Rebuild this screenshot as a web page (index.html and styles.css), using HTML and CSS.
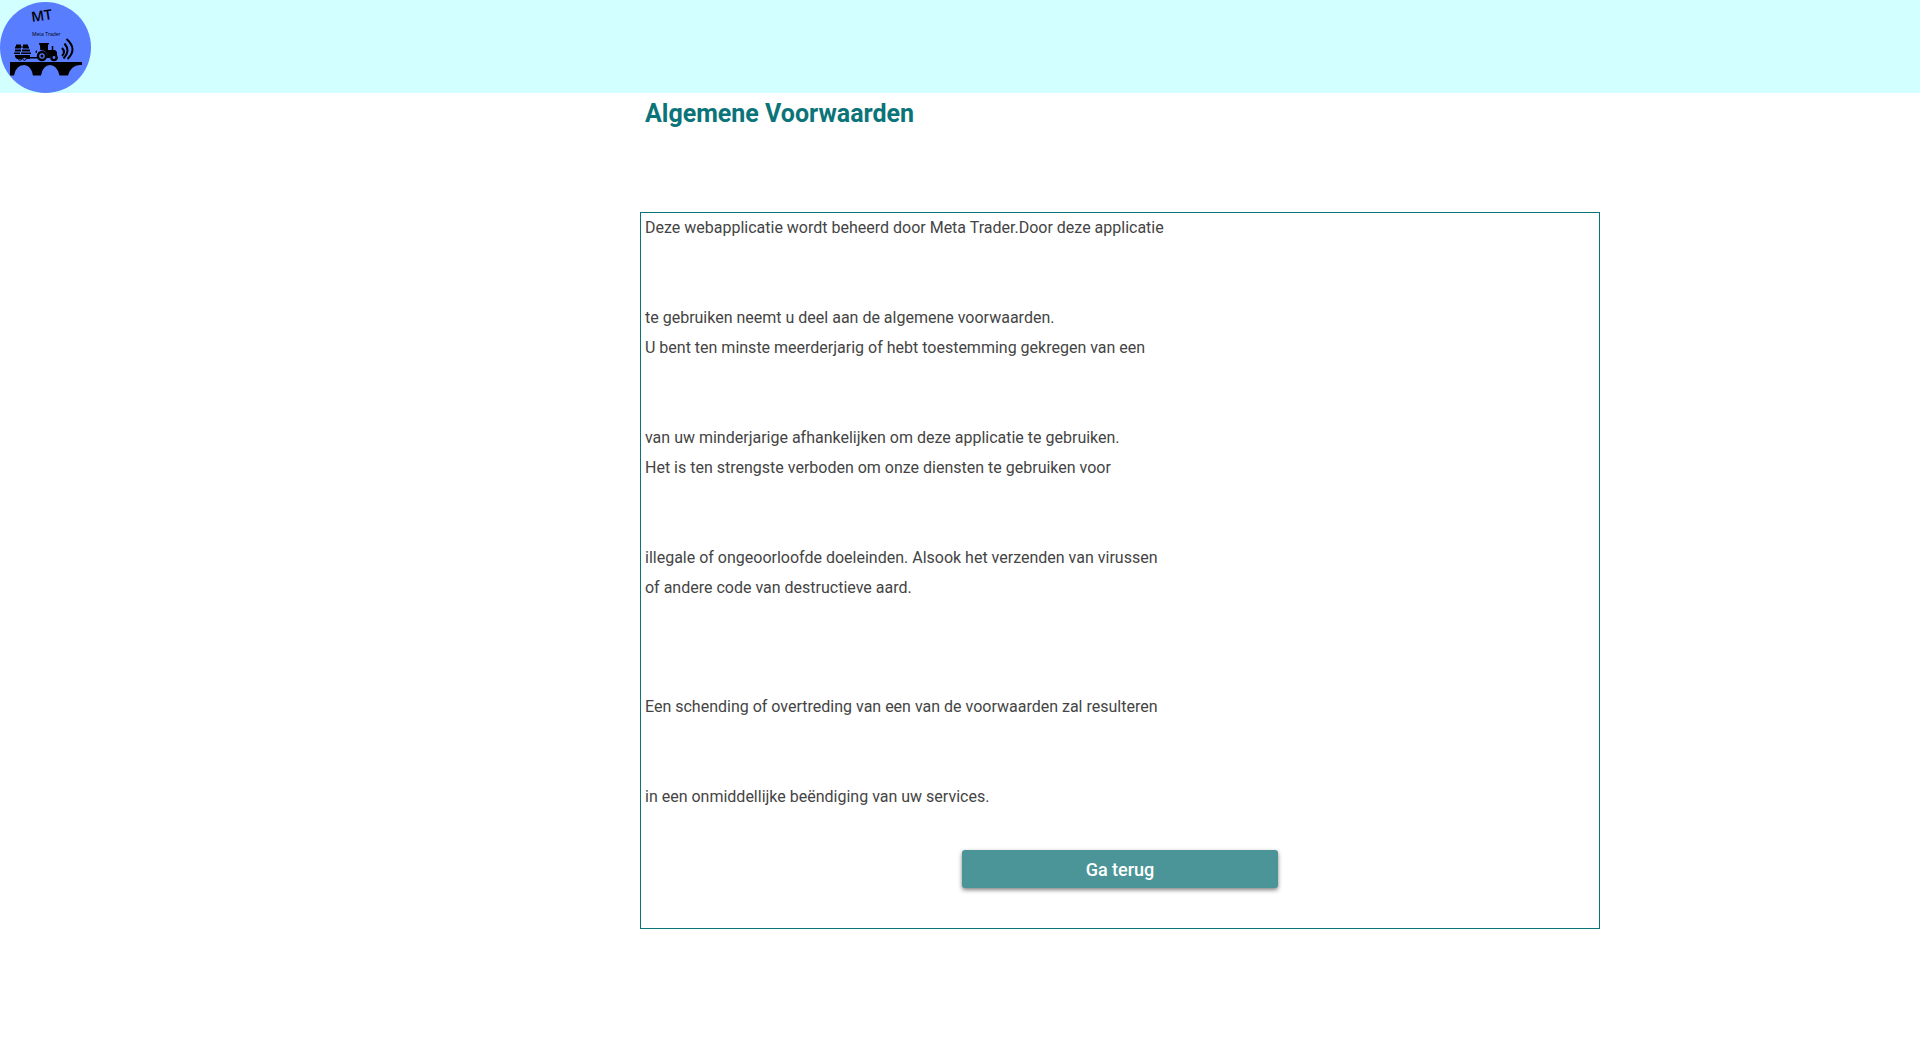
FILE: index.html
```html
<!DOCTYPE html>
<html lang="nl">
<head>
<meta charset="utf-8">
<meta name="viewport" content="width=device-width, initial-scale=1">
<title>Algemene Voorwaarden - Meta Trader</title>
<link rel="stylesheet" href="styles.css">
</head>
<body>
<header class="site-header">
  <svg class="logo" viewBox="0 0 91 91" role="img" aria-label="Meta Trader">
    <circle cx="45.500" cy="45.500" r="45.500" fill="#587dff"/>
    <text class="logo-initials" x="32" y="20" transform="rotate(-8 32 20)">MT</text>
    <text class="logo-name" x="32" y="34">Meta Trader</text>
    <!-- bridge -->
    <path d="M10 60H82V63H80Q71 63 68 73.500H59.500Q57 63 50 63Q43 63 41 73.500H33Q31 63 24 63Q16 63 14 73.500H10Z"/>
    <!-- trailer with crates -->
    <path d="M16 42.500h5v2h2v-2h5v2h1v2h-6v-1h-2v1h-6v-2h1zM15 47.500h6v2h-6zM22 47.500h8v2h-8zM14 50.500h6v1.500h-6zM21 50.500h10v1.500h-10zM15 53h15v4h-3a3 3 0 0 0-5 0h-5l-2-2zM30 55h8v1.500h-8z"/>
    <g fill="none" stroke="#000">
      <circle cx="20" cy="56.500" r="1.700"/><circle cx="24.500" cy="56.500" r="1.700"/>
      <circle cx="42" cy="54" r="4" stroke-width="2.400"/>
      <circle cx="54" cy="55.500" r="2.600" stroke-width="2.400"/>
      <path d="M39.500 42H48M41 42V48M47 42V49M52.500 44V49" stroke-width="1.500"/>
      <path d="M62 46Q66 50 62 54M64.500 41.500Q71 49 63.500 56.500M66.500 37Q78 47 67.500 57" stroke-width="2"/>
    </g>
    <circle cx="42" cy="54" r="1.500"/>
    <path d="M39 41h10v1.500h-1V48h7l2 2v3q-6-2-7 3h-3q1-8-7-8l1-1zM35 50l2-2v3z"/>
  </svg>
</header>
<main class="page">
  <h1 class="page-title">Algemene Voorwaarden</h1>
  <section class="terms">
    <p class="line gap">Deze webapplicatie wordt beheerd door Meta Trader.Door deze applicatie</p>
    <p class="line">te gebruiken neemt u deel aan de algemene voorwaarden.</p>
    <p class="line gap">U bent ten minste meerderjarig of hebt toestemming gekregen van een</p>
    <p class="line">van uw minderjarige afhankelijken om deze applicatie te gebruiken.</p>
    <p class="line gap">Het is ten strengste verboden om onze diensten te gebruiken voor</p>
    <p class="line">illegale of ongeoorloofde doeleinden. Alsook het verzenden van virussen</p>
    <p class="line gap-large">of andere code van destructieve aard.</p>
    <p class="line gap">Een schending of overtreding van een van de voorwaarden zal resulteren</p>
    <p class="line">in een onmiddellijke beëndiging van uw services.</p>
    <button class="back-button" type="button">Ga terug</button>
  </section>
</main>
</body>
</html>
```
FILE: styles.css
```css
* {
  box-sizing: border-box;
}

body {
  margin: 0;
  background: #fff;
  color: #444;
  font-family: Roboto, "Liberation Sans", sans-serif;
  font-size: 16px;
}

.site-header {
  display: flex;
  padding-top: 2px;
  background: #d2ffff;
}

.logo {
  display: block;
  width: 91px;
  height: 91px;
}

.logo-initials {
  font: 600 14px "Open Sans", sans-serif;
}

.logo-name {
  font: 5px "Open Sans", sans-serif;
}

.page {
  width: 50%;
  margin-left: 33.3333%;
}

.page-title {
  margin: 0 0 77px;
  padding: 0 5px;
  color: #0b7479;
  font-size: 25px;
  font-weight: 700;
  line-height: 42px;
}

.terms {
  display: flex;
  flex-direction: column;
  padding: 0 4px 40px;
  border: 1px solid #0b7479;
}

.line {
  margin: 0;
  line-height: 30px;
}

.gap {
  margin-bottom: 60px;
}

.gap-large {
  margin-bottom: 89px;
}

.back-button {
  align-self: center;
  width: 33.3333%;
  height: 38px;
  margin-top: 38px;
  border: 0;
  border-radius: 3px;
  background: #4b9598;
  box-shadow: 0 2px 4px rgba(0, 0, 0, 0.5);
  color: #fff;
  font-family: inherit;
  font-size: 18px;
  font-weight: 500;
}
```
